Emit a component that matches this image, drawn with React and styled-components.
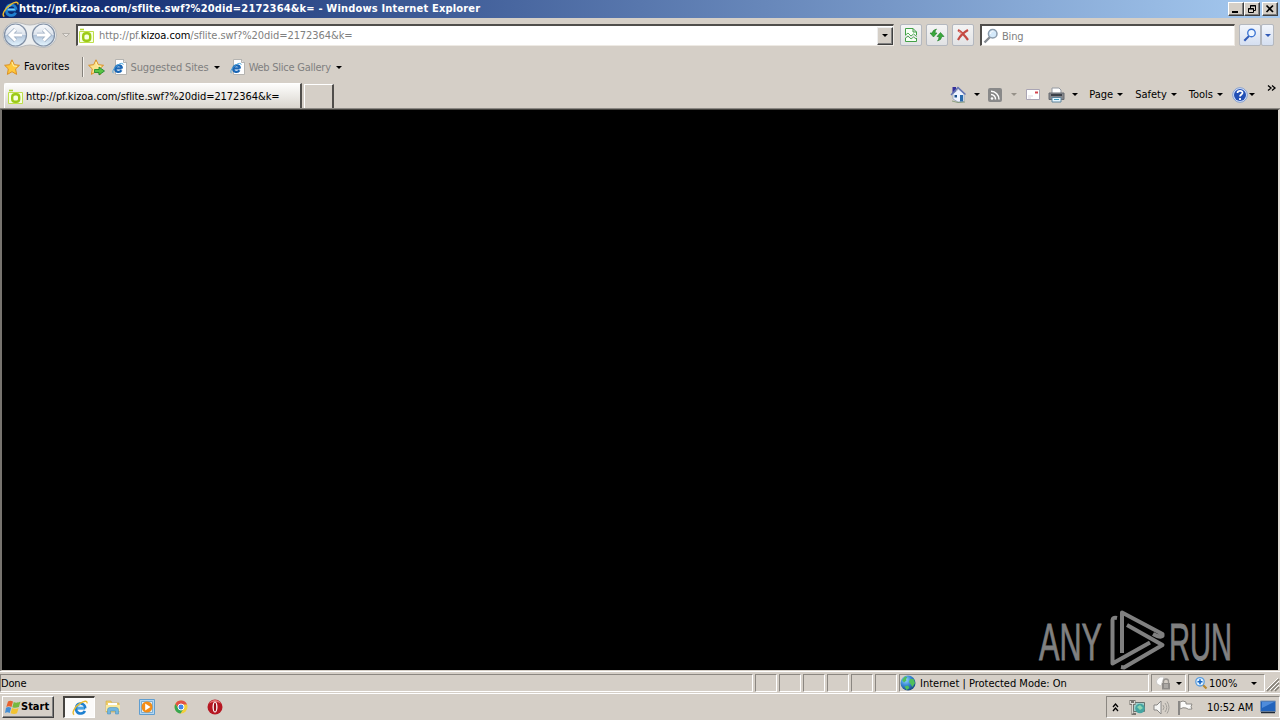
import React from 'react';
import styled, { createGlobalStyle } from 'styled-components';

const GlobalStyle = createGlobalStyle`
    * { box-sizing: border-box; }
    body {
        margin: 0;
        overflow: hidden;
        background: #d5cfc7;
        color: #000;
        font: 11px/14px "DejaVu Sans Condensed", "DejaVu Sans", sans-serif;
    }
    svg { display: block; flex: none; overflow: visible; }
`;

const Desktop = styled.div`
    width: 1280px;
    height: 720px;
    display: flex;
    flex-direction: column;
    background: #d5cfc7;
`;
const Label = styled.span`
    flex: none;
    white-space: pre;
    color: ${props => props.$color || "#000"};
    font-weight: ${props => props.$bold ? "bold" : "normal"};
    letter-spacing: ${props => props.$track || 0}px;
    margin-left: ${props => props.$left || 0}px;
    padding-top: ${props => props.$drop || 0}px;
`;
const Host = styled.span`
    color: #000;
`;
const Caret = styled.i`
    flex: none;
    width: 0;
    height: 0;
    border: 3px solid transparent;
    border-top-color: ${props => props.$color || "#000"};
    border-bottom: 0;
    margin-left: ${props => props.$left || 0}px;
`;
const Slot = styled.span`
    flex: none;
    display: block;
    margin-left: ${props => props.$left || 0}px;
`;

const TitleBar = styled.header`
    height: 18px;
    flex: none;
    display: flex;
    align-items: center;
    padding: 0 2px;
    background: linear-gradient(90deg, #0a246a, #a6caf0);
`;
const WindowButtons = styled.div`
    display: flex;
    margin-left: auto;
`;
const WindowButton = styled.button`
    width: 16px;
    height: 14px;
    padding: 0;
    margin-left: ${props => props.$gap || 0}px;
    display: flex;
    align-items: center;
    justify-content: center;
    background: #d5cfc7;
    border: 1px solid;
    border-color: #fff #404040 #404040 #fff;
    box-shadow: inset -1px -1px #808080;
`;

const AddressRow = styled.div`
    height: 36px;
    flex: none;
    display: flex;
    align-items: center;
    padding: 0 5px 2px 2px;
`;
const Field = styled.div`
    width: ${props => props.$width}px;
    height: 22px;
    flex: none;
    display: flex;
    align-items: center;
    margin-left: ${props => props.$left}px;
    padding-left: ${props => props.$pad || 0}px;
    background: #fff;
    border: solid;
    border-width: 2px 1px 1px 2px;
    border-color: #504e4b #eeeae4 #eeeae4 #504e4b;
`;
const DropButton = styled.button`
    width: 16px;
    height: 18px;
    margin-left: auto;
    padding: 0;
    display: flex;
    align-items: center;
    justify-content: center;
    background: #d5cfc7;
    border: 1px solid;
    border-color: #eee #404040 #404040 #eee;
    box-shadow: inset -1px -1px #808080;
`;
const ToolButton = styled.button`
    width: ${props => props.$width || 22}px;
    height: 22px;
    flex: none;
    margin-left: ${props => props.$left || 0}px;
    padding: 0;
    display: flex;
    align-items: center;
    justify-content: center;
    border: 1px solid #b4b8bf;
    border-radius: 2px;
    background: ${props => props.$blue ? "linear-gradient(#f2f5fb, #d5dff0)" : "linear-gradient(#f4f4f4, #e1e2e4)"};
`;

const FavoritesRow = styled.div`
    height: 26px;
    flex: none;
    display: flex;
    align-items: center;
    padding-left: 4px;
`;
const Separator = styled.span`
    width: 2px;
    height: 20px;
    margin-left: 12px;
    border-left: 1px solid #85817b;
    border-right: 1px solid #f4f1ec;
`;

const TabRow = styled.div`
    height: 29px;
    flex: none;
    display: flex;
    align-items: flex-end;
    padding: 0 4px 0 4px;
    border-bottom: 1px solid #8b8883;
`;
const Tab = styled.div`
    width: 298px;
    height: 25px;
    display: flex;
    align-items: center;
    padding: 1px 0 0 2px;
    background: linear-gradient(#fdfdfc, #d9d5ce);
    border: 1px solid #fff;
    border-right: 2px solid #504e4b;
    border-bottom: 0;
    border-radius: 2px 0 0 0;
`;
const NewTab = styled.div`
    width: 30px;
    height: 24px;
    margin-left: 2px;
    border: 1px solid #fff;
    border-right: 2px solid #504e4b;
    border-bottom: 0;
`;
const CommandBar = styled.nav`
    height: 27px;
    display: flex;
    align-items: center;
    margin-left: auto;
`;
const Chevron = styled.span`
    align-self: flex-start;
    margin: 4px 0 0 12px;
`;

const Page = styled.main`
    height: 562px;
    flex: none;
    display: flex;
    justify-content: flex-end;
    align-items: flex-end;
    padding-right: 42px;
    background: #000;
    border: solid;
    border-width: 1px 2px 1px 2px;
    border-color: #45433f #dfdad3 #d5cfc7 #77746f;
`;

const StatusBar = styled.footer`
    height: 23px;
    flex: none;
    display: flex;
    padding-top: 2px;
    gap: 2px;
    background: #d5cfc7;
    border-top: 1px solid #fff;
    border-bottom: 1px solid #fff;
`;
const Pane = styled.div`
    width: ${props => props.$width}px;
    height: 18px;
    flex: none;
    display: flex;
    align-items: center;
    padding-left: ${props => props.$pad || 0}px;
    border: 1px solid;
    border-color: #8b8781 #fff #fff #8b8781;
`;

const TaskBar = styled.footer`
    height: 26px;
    flex: none;
    display: flex;
    align-items: center;
    padding-left: 2px;
`;
const StartButton = styled.button`
    width: 52px;
    height: 22px;
    display: flex;
    align-items: center;
    padding: 0 0 0 2px;
    font: inherit;
    background: #d5cfc7;
    border: 1px solid;
    border-color: #fff #404040 #404040 #fff;
    box-shadow: inset -1px -1px #808080;
`;
const ActiveTask = styled.div`
    width: 32px;
    height: 22px;
    margin-left: 9px;
    display: flex;
    align-items: center;
    justify-content: center;
    background: #fbfaf9;
    border: solid;
    border-width: 2px 1px 1px 2px;
    border-color: #45433f #fff #fff #45433f;
`;
const Tray = styled.div`
    width: 174px;
    height: 22px;
    margin-left: auto;
    display: flex;
    align-items: center;
    padding-left: 5px;
    border: 1px solid;
    border-color: #8b8781 #fff #fff #8b8781;
`;

const IeLogo = ({ size = 17 }) => (
    <svg width={size} height={size} viewBox="0 0 16 16" fill="none">
        <path d="M13.2 8.2H5.1M12.7 10.9C11.7 14 6.6 14.6 4.6 11.2C2.7 7.8 5 3.7 8.6 3.7C11.6 3.7 13.2 5.8 13.2 8.3" stroke="#1f80d0" strokeWidth="2.7" />
        <path d="M12 8H5.3M5.2 6.2C6 4.7 7.3 4.2 8.8 4.3" stroke="#78cdf8" strokeWidth="1.2" />
        <path d="M2.2 14.6C-1 13.2 3.2 6.5 8 3.4C12 .8 15.5.2 15 3.3" stroke="#e8b92e" strokeWidth="1.4" />
    </svg>
);
const IePage = () => (
    <svg width="16" height="16" viewBox="0 0 16 16">
        <path d="M3.5.5H11.500L14.500 3.500v12H3.5Z" fill="#fff" stroke="#b5b4b1" />
        <path d="M11.500.5v3h3" fill="#e6e4e1" stroke="#999" strokeWidth=".7" />
        <g transform="translate(0 3.200) scale(.76)" fill="none">
            <path d="M12.7 8.2H4.500M12.400 10.500C10.500 14 4.400 13.400 4.300 8.500C4.300 2.800 13 3 13 8.400" stroke="#1a66b5" strokeWidth="3" />
            <path d="M2 14.500C-1 12 4 5.600 9 2.800C12 1 15 1 14.600 3.500" stroke="#49a4db" strokeWidth="1.300" />
        </g>
    </svg>
);
const Kizoa = () => (
    <svg width="17" height="16" viewBox="0 0 17 16" fill="none">
        <path d="M1.500 14.500V3.500H15.500V14.500Z" fill="#f7ffe1" stroke="#bfdf4a" />
        <path d="M2 1.500H6" stroke="#afd32d" strokeWidth="1.600" />
        <rect x="5.200" y="5.200" width="7" height="7.600" rx="2.800" stroke="#9cca16" strokeWidth="2.400" />
    </svg>
);
const NavButtons = () => (
    <svg width="56" height="28" viewBox="0 0 56 28">
        <defs>
            <linearGradient id="orb" x2="0" y2="1">
                <stop stopColor="#f8fafd" /><stop offset=".48" stopColor="#dce3ec" />
                <stop offset=".52" stopColor="#b4c6db" /><stop offset="1" stopColor="#e4f5ff" />
            </linearGradient>
        </defs>
        <path d="M1 14A12.5 12.5 0 0 1 14 1.5C20 1.5 22 4 28 4S36 1.5 42 1.5A12.5 12.5 0 0 1 42 26.500C36 26.500 34 24 28 24S20 26.500 14 26.500A12.500 12.500 0 0 1 1 14Z" fill="#eceeef" stroke="#b9babb" />
        <circle cx="13.500" cy="14" r="11" fill="url(#orb)" stroke="#8291a6" strokeWidth="1.200" />
        <circle cx="41.500" cy="14" r="11" fill="url(#orb)" stroke="#8291a6" strokeWidth="1.200" />
        <path d="M20 14H8M13.500 8.500L8 14L13.500 19.500M35 14H47M41.500 8.500L47 14L41.500 19.500" fill="none" stroke="#98a9be" strokeWidth="4.300" />
        <path d="M20 14H8M13.500 8.500L8 14L13.500 19.500M35 14H47M41.500 8.500L47 14L41.500 19.500" fill="none" stroke="#fff" strokeWidth="3" />
    </svg>
);
const Star = ({ add }) => (
    <svg width="17" height="17" viewBox="0 0 17 17">
        <path d="M8 .8L10.300 5.700L15.500 6.300L11.600 9.900L12.600 15.400L8 12.700L3.400 15.400L4.300 9.900L.6 6.300L5.700 5.700Z" fill={add ? "#fbe38d" : "#ffc83a"} stroke="#db9024" />
        <path d="M8 3L9.500 7L13 7.300" fill="none" stroke="#fff2ac" />
        {add && <path d="M6.500 10.500H11V8L16.500 12L11 16V13.500H6.500Z" fill="#58c444" stroke="#16842a" strokeWidth=".8" />}
    </svg>
);
const BrokenPage = () => (
    <svg width="14" height="16" viewBox="0 0 14 16" fill="none" stroke="#43a047">
        <path d="M1.500 8V1.500H9L12.500 5V8M9 1.500V5H12.500M1.500 11V14.500H12.500V11" fill="#f7fff6" />
        <path d="M1 8.500L4 6L7 9L9.500 7L13 9.500M1 11.500L4 9L7 12L9.500 10L13 12.500" strokeWidth=".9" />
    </svg>
);
// two short arrows that bend away from each other
const Refresh = () => (
    <svg width="16" height="16" viewBox="0 0 16 16">
        <path d="M4.500 10L1 6H3.200Q3.500 3 7.500 2Q6 3.500 6 6H8ZM11.500 5.500L15 9.500H12.800Q12.500 13 8.500 14Q10 12.500 10 9.500H8Z" fill="#3aa83c" stroke="#217d2b" strokeWidth=".6" />
    </svg>
);
const Cross = () => (
    <svg width="14" height="14" viewBox="0 0 14 14" fill="none">
        <path d="M2 2Q7 5 12 12M12 2Q5 6 2 12" stroke="#c44942" strokeWidth="2.200" />
        <path d="M3 3L6 5.700" stroke="#ee8a7f" />
    </svg>
);
const Search = ({ strong, size = 16 }) => (
    <svg width={size} height={size} viewBox="0 0 16 16" fill="none">
        <path d="M7 9L1.500 14.500" stroke={strong ? "#315ab6" : "#858b91"} strokeWidth="2.400" />
        <circle cx="9.700" cy="5.700" r="4.300" fill={strong ? "#edf5ff" : "#d4e9fa"} stroke={strong ? "#3972d2" : "#8b9cad"} strokeWidth="1.500" />
        {!strong && <path d="M7.500 6C7.500 4 9 3 10.500 3" stroke="#fff" />}
    </svg>
);
const Home = () => (
    <svg width="17" height="17" viewBox="0 0 17 17">
        <path d="M2.500 1H6V6L2.500 8Z" fill="#342f9a" />
        <path d="M3 8L8.500 3L14 8V15.500L8 16L3 13Z" fill="#eef3ff" stroke="#8a9bb5" strokeWidth=".7" />
        <path d="M1 9L8 1.500L15.500 8.500" fill="none" stroke="#6172b4" strokeWidth="1.400" />
        <path d="M10 9H13V15.500H10Z" fill="#296bae" /><path d="M4.500 9H7V11.500H4.500Z" fill="#194f8c" />
        <path d="M2 15L8 16.500L15 16" fill="none" stroke="#78936f" strokeWidth=".8" />
    </svg>
);
const Rss = () => (
    <svg width="14" height="14" viewBox="0 0 14 14">
        <rect width="14" height="14" rx="2" fill="#898989" />
        <circle cx="4" cy="10.500" r="1.300" fill="#fff" />
        <path d="M3 6.500A4.500 4.500 0 0 1 7.500 11.500M3 3.200A8 8 0 0 1 11 11.500" fill="none" stroke="#fff" strokeWidth="1.500" />
    </svg>
);
const Mail = () => (
    <svg width="14" height="11" viewBox="0 0 14 11">
        <path d="M.5.5H13.500V10.500H.5Z" fill="#fff" stroke="#aaa5b4" />
        <path d="M2 7H7M2 9H5" stroke="#ddd7df" /><path d="M9 2.500H12V4.500H9Z" fill="#d5444d" />
    </svg>
);
const Printer = () => (
    <svg width="17" height="16" viewBox="0 0 17 16">
        <path d="M4 1H11L13 3V7H4Z" fill="#fff" stroke="#9398a0" />
        <path d="M1 6H16V12.500H1Z" fill="#85878c" stroke="#666a70" />
        <path d="M3 7H14V9H3Z" fill="#3c4149" /><path d="M4 10.500H13V15H4Z" fill="#e4f6ff" stroke="#61859c" />
        <path d="M6 12.500H11" stroke="#3e9cbd" />
    </svg>
);
const Help = () => (
    <svg width="16" height="16" viewBox="0 0 16 16">
        <circle cx="8" cy="8" r="7.300" fill="#d9e5ff" stroke="#839fcf" />
        <circle cx="8" cy="8" r="6" fill="#2350b5" />
        <path d="M5.500 6C5.500 3 10.800 3.200 10.500 6C10.400 7.500 8 7.600 8 9.500M8 11V13" fill="none" stroke="#fff" strokeWidth="1.800" />
    </svg>
);
const Globe = () => (
    <svg width="16" height="16" viewBox="0 0 16 16">
        <defs><radialGradient id="sea" cx=".35" cy=".3" r=".7"><stop stopColor="#9ad6ff" /><stop offset=".5" stopColor="#3b8bd8" /><stop offset="1" stopColor="#1a4d88" /></radialGradient></defs>
        <circle cx="8" cy="8" r="7.500" fill="url(#sea)" />
        <path d="M2 5L5 1.500L7.500 2L6 4L6.500 5.500L4 7.500ZM10 4L13.500 4L15 8L12.500 12L10.500 9L9 7ZM4.500 11.500L8 10.500L9.500 13L6.500 15Z" fill="#4fbf5b" />
    </svg>
);
const LockGlobe = () => (
    <svg width="18" height="16" viewBox="0 0 18 16">
        <path d="M2 9A6 5 0 0 1 9 2L6 11Z" fill="#fff" stroke="#cbc9c6" />
        <path d="M8.500 8V6.500Q8.500 4 11 4T13.500 6.500V8" fill="none" stroke="#96938f" strokeWidth="1.300" />
        <path d="M7 8H15V14.500H7Z" fill="#8f8c89" /><path d="M9 10H13M9 12H13" stroke="#c7c4c0" />
    </svg>
);
const ZoomIn = () => (
    <svg width="14" height="14" viewBox="0 0 14 14" fill="none">
        <path d="M8.500 8.500L12.500 12.500" stroke="#b9882f" strokeWidth="2.200" />
        <circle cx="6" cy="5.800" r="4.200" fill="#e3f3ff" stroke="#5b9dde" strokeWidth="1.300" />
        <path d="M3.500 5.800H8.500M6 3.300V8.300" stroke="#1565c4" strokeWidth="1.600" />
    </svg>
);
const Grip = () => (
    <svg width="12" height="18" viewBox="0 0 12 18" fill="none">
        <path d="M0 17L12 5M4 17L12 9M8 17L12 13" stroke="#858178" strokeWidth="1.600" />
        <path d="M-1 16L11 4M3 16L12 7M7 16L12 11" stroke="#fff" />
    </svg>
);
const Windows = () => (
    <svg width="16" height="15" viewBox="0 0 16 15">
        <path d="M3 1.500C4.500.5 6 .5 8 1.500L6.500 7C4.500 6 3 6 1.300 7Z" fill="#e7612e" />
        <path d="M8.800 2C10.500 3 12.500 3 15.500 1.500L13.900 7C11.500 8 9.500 8 7.300 7.200Z" fill="#76b840" />
        <path d="M1 7.700C2.700 6.900 4.400 6.900 6.200 7.800L4.700 13C3 12 1.500 12 0 13Z" fill="#438ed5" />
        <path d="M7 8.100C9 9.100 11 9.100 13.600 8L12 13.200C10 14.400 7.500 14 5.600 13.200Z" fill="#f2c331" />
    </svg>
);
const Folder = () => (
    <svg width="16" height="16" viewBox="0 0 16 16">
        <path d="M1 2H6L7 4H14V13H1Z" fill="#f0cd69" stroke="#d2ac4a" strokeWidth=".6" />
        <path d="M3 4H12V6H3Z" fill="#fff" /><path d="M1 6H15V12H1Z" fill="#f9e89d" />
        <path d="M2.500 15V11Q2.500 8.500 5 8.500H11Q13.500 8.500 13.500 11V15H10.500V12H5.500V15Z" fill="#73b6df" stroke="#4d94c0" strokeWidth=".6" />
    </svg>
);
const Player = () => (
    <svg width="16" height="16" viewBox="0 0 16 16">
        <path d="M.5.5H15.500V15.500H.5Z" fill="#b3d7f3" stroke="#609ed0" />
        <path d="M2.500 2.500H13.500V13.500H2.500Z" fill="#e2edf2" stroke="#7cadd1" />
        <circle cx="8" cy="8" r="5.500" fill="#f48d17" /><path d="M6.200 4.500L11.500 8L6.200 11.500Z" fill="#fff" />
    </svg>
);
const Chrome = () => (
    <svg width="14" height="14" viewBox="0 0 14 14">
        <circle cx="7" cy="7" r="6.500" fill="#f2cf3c" />
        <path d="M1.300 4A6.500 6.500 0 0 1 13 4.500H7L4.500 8Z" fill="#e25246" />
        <path d="M1.300 4A6.500 6.500 0 0 0 6.500 13.500L9 9.500H5.500Z" fill="#38a652" />
        <circle cx="7" cy="7" r="3" fill="#4387e9" stroke="#fff" />
    </svg>
);
const Opera = () => (
    <svg width="16" height="16" viewBox="0 0 16 16">
        <circle cx="8" cy="8" r="7.500" fill="#b61722" /><path d="M2 4.500A7 7 0 0 1 14 4.500Q8 1 2 4.500" fill="#e57575" />
        <ellipse cx="8" cy="8" rx="2.500" ry="5.500" fill="#fff" /><ellipse cx="8" cy="8" rx="1.200" ry="4.500" fill="#9a0e17" />
    </svg>
);
const NetworkIcon = () => (
    <svg width="17" height="16" viewBox="0 0 17 16">
        <path d="M4.500 3.500H15.500V12.500H4.500Z" fill="#9fcfca" stroke="#66726f" />
        <circle cx="11" cy="9.500" r="4.800" fill="#45a5a2" /><path d="M8 8L11 6L14 9L11 11Z" fill="#8dd6b1" />
        <path d="M1.500 1V5H5.500V1M3.500 1V15H7" fill="none" stroke="#77746f" strokeWidth="2" />
        <path d="M1.500 2V4.500H5.500V2M3.500 4V14.500" fill="none" stroke="#f2f1ef" strokeWidth=".8" />
    </svg>
);
const Speaker = () => (
    <svg width="17" height="15" viewBox="0 0 17 15">
        <path d="M1 5H4L8 1V14L4 10H1Z" fill="#f5f5f3" stroke="#898785" />
        <path d="M10 5Q12 7.500 10 10M12 3Q15.500 7.500 12 12M14 1.500Q18 7.500 14 13.500" fill="none" stroke="#a29f9a" />
    </svg>
);
const Flag = () => (
    <svg width="17" height="15" viewBox="0 0 17 15">
        <path d="M2 1V15" stroke="#898785" strokeWidth="2" />
        <path d="M3 2Q6 0 9 2V4H15Q13 7 15 9Q11 10 9 8Q6 7 3 9Z" fill="#fbfbfa" stroke="#8d8a85" />
    </svg>
);
const DesktopIcon = () => (
    <svg width="16" height="14" viewBox="0 0 16 14">
        <path d="M.5 1H15.500V11.500H.5Z" fill="#2264bc" stroke="#7f97b5" />
        <path d="M2 2H14L2 8Z" fill="#4e8cdb" /><path d="M1 12.500H15" stroke="#1c2837" strokeWidth="1.500" />
    </svg>
);
const AnyRun = () => (
    <svg width="200" height="62" viewBox="0 0 200 62">
        <g fill="#808080" stroke="#808080" strokeWidth=".8" fontFamily="Liberation Sans Narrow, Liberation Sans" fontSize="51">
            <text x="3" y="52" textLength="63" lengthAdjust="spacingAndGlyphs">ANY</text>
            <text x="133" y="52" textLength="63" lengthAdjust="spacingAndGlyphs">RUN</text>
        </g>
        <g fill="none" stroke="#808080" strokeWidth="4" strokeLinejoin="round">
            <path d="M86 45V4.500L126.500 26V28Q124 30 117 26" />
            <path d="M81 10Q76.500 9 76.500 12V55.500L114 34.500" />
            <path d="M91 17L126.500 37L88 59.500L85 59" />
        </g>
    </svg>
);

const App = function(){

    return(
        <Desktop>
            <GlobalStyle />
            <TitleBar>
                <IeLogo />
                <Label $bold $track={0.175} $color="#fff">http://pf.kizoa.com/sflite.swf?%20did=2172364&amp;k= - Windows Internet Explorer</Label>
                <WindowButtons>
                    <WindowButton><svg width="10" height="10"><path d="M1 8H7" stroke="#000" strokeWidth="2" /></svg></WindowButton>
                    <WindowButton><svg width="10" height="10" fill="none" stroke="#000"><path d="M3.500 4V1.500H8.500V6.500H7M3 2H9M1.500 4.500H6.500V8.500H1.500ZM1 5H7" /></svg></WindowButton>
                    <WindowButton $gap={2}><svg width="10" height="10"><path d="M1.500 1.500L8 8M8 1.500L1.500 8" stroke="#000" strokeWidth="1.700" /></svg></WindowButton>
                </WindowButtons>
            </TitleBar>
            <AddressRow>
                <NavButtons />
                <Slot $left={4}><svg width="8" height="5"><path d="M.5.5H7.500L4 4Z" fill="#e8e4df" stroke="#aaa6a0" strokeWidth=".8" /></svg></Slot>
                <Field $width={818} $left={6}>
                    <Kizoa />
                    <Label $left={4} $drop={1} $track={-0.06} $color="#808080">http://pf.<Host>kizoa.com</Host>/sflite.swf?%20did=2172364&amp;k=</Label>
                    <DropButton><Caret /></DropButton>
                </Field>
                <ToolButton $left={6}><BrokenPage /></ToolButton>
                <ToolButton $left={4}><Refresh /></ToolButton>
                <ToolButton $left={4}><Cross /></ToolButton>
                <Field $width={255} $left={6} $pad={1}>
                    <Search />
                    <Label $left={3} $drop={2} $track={-0.2} $color="#808080">Bing</Label>
                </Field>
                <ToolButton $left={4} $width={22} $blue><Search strong size={14} /></ToolButton>
                <ToolButton $width={13} $blue><Caret $color="#315ab6" /></ToolButton>
            </AddressRow>
            <FavoritesRow>
                <Star />
                <Label $left={3} $track={0.1}>Favorites</Label>
                <Separator />
                <Slot $left={4}><Star add /></Slot>
                <Slot $left={7}><IePage /></Slot>
                <Label $left={3} $drop={1} $track={-0.12} $color="#808080">Suggested Sites</Label>
                <Caret $left={5} />
                <Slot $left={10}><IePage /></Slot>
                <Label $left={3} $drop={1} $track={-0.25} $color="#808080">Web Slice Gallery</Label>
                <Caret $left={5} />
            </FavoritesRow>
            <TabRow>
                <Tab>
                    <Kizoa />
                    <Label $left={2} $track={-0.06}>http://pf.kizoa.com/sflite.swf?%20did=2172364&amp;k=</Label>
                </Tab>
                <NewTab />
                <CommandBar>
                    <Home />
                    <Caret $left={7} />
                    <Slot $left={8}><Rss /></Slot>
                    <Caret $left={9} $color="#969189" />
                    <Slot $left={9}><Mail /></Slot>
                    <Slot $left={8}><Printer /></Slot>
                    <Caret $left={7} />
                    <Label $left={11}>Page</Label>
                    <Caret $left={4} />
                    <Label $left={12}>Safety</Label>
                    <Caret $left={4} />
                    <Label $left={12}>Tools</Label>
                    <Caret $left={4} />
                    <Slot $left={9}><Help /></Slot>
                    <Caret $left={1} />
                    <Chevron><svg width="9" height="7" fill="none" stroke="#000" strokeWidth="1.300"><path d="M1 .5L4 3L1 5.500M5 .5L8 3L5 5.500" /></svg></Chevron>
                </CommandBar>
            </TabRow>
            <Page><AnyRun /></Page>
            <StatusBar>
                <Pane $width={753}><Label $drop={1} $track={-0.15}>Done</Label></Pane>
                {[0, 1, 2, 3, 4, 5].map(i => <Pane key={i} $width={22} />)}
                <Pane $width={250}>
                    <Globe />
                    <Label $left={4} $drop={1}>Internet | Protected Mode: On</Label>
                </Pane>
                <Pane $width={35} $pad={3}><LockGlobe /><Caret $left={3} /></Pane>
                <Pane $width={77} $pad={5}><ZoomIn /><Label $left={1} $drop={1}>100%</Label><Caret $left={14} /></Pane>
                <Grip />
            </StatusBar>
            <TaskBar>
                <StartButton><Windows /><Label $bold>Start</Label></StartButton>
                <ActiveTask><IeLogo size={16} /></ActiveTask>
                <Slot $left={10}><Folder /></Slot>
                <Slot $left={18}><Player /></Slot>
                <Slot $left={19}><Chrome /></Slot>
                <Slot $left={19}><Opera /></Slot>
                <Tray>
                    <svg width="7" height="9" fill="none" stroke="#000" strokeWidth="1.300"><path d="M1 4L3.500 1L6 4M1 8L3.500 5L6 8" /></svg>
                    <Slot $left={10}><NetworkIcon /></Slot>
                    <Slot $left={7}><Speaker /></Slot>
                    <Slot $left={7}><Flag /></Slot>
                    <Label $left={13} $drop={1} $track={-0.1}>10:52 AM</Label>
                    <Slot $left={7}><DesktopIcon /></Slot>
                </Tray>
            </TaskBar>
        </Desktop>
    );
};
export default App;
